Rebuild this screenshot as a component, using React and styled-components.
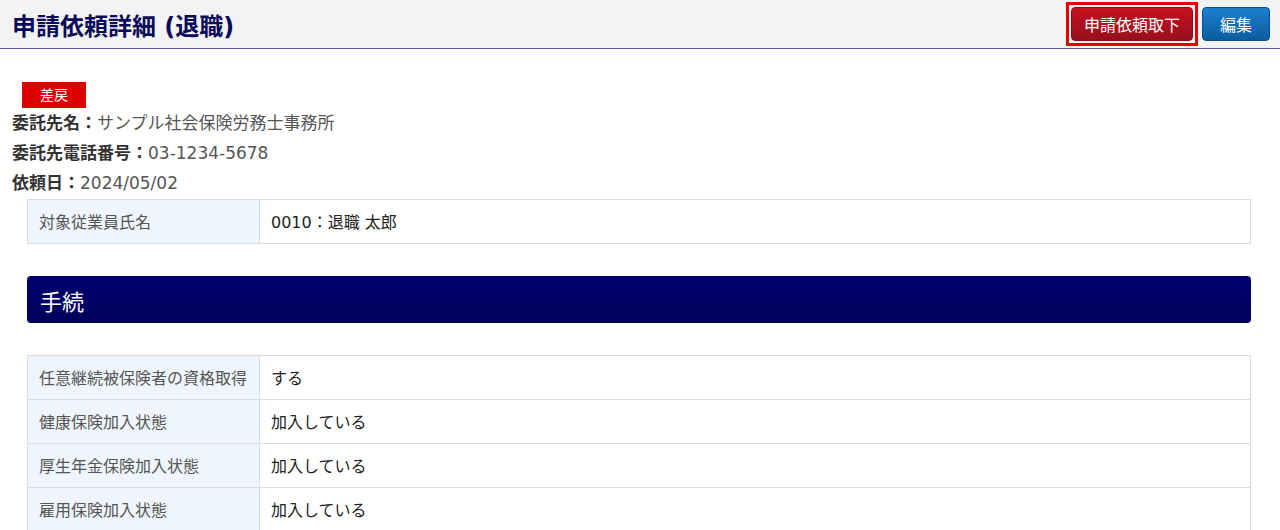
import React from 'react';
import styled, { createGlobalStyle } from 'styled-components';

const GlobalStyle = createGlobalStyle`
  html, body {
    margin: 0;
    padding: 0;
    background: #fff;
    font-family: "DejaVu Sans", "Noto Sans CJK JP", sans-serif;
    color: #333;
  }
`;

const Page = styled.div`
  width: 1280px;
`;

const Header = styled.div`
  display: flex;
  align-items: center;
  height: 48px;
  padding: 0 10px 0 12px;
  background: #f3f3f3;
  border-bottom: 1px solid #55559a;
`;

const Title = styled.h1`
  margin: 0;
  flex: 1;
  font-size: 24px;
  font-weight: 700;
  color: #0a0a5a;
`;

const Actions = styled.div`
  display: flex;
  align-items: center;
  gap: 4px;
`;

const Highlight = styled.div`
  padding: 2px;
  border: 3px solid #e60000;
  display: flex;
`;

const Button = styled.button`
  height: 34px;
  padding: 0 ${(p) => (p.wide ? '12px' : '17px')};
  border: 1px solid ${(p) => (p.tone === 'red' ? '#8e0a15' : '#0b4f88')};
  border-radius: 4px;
  color: #fff;
  font-family: inherit;
  font-size: 16px;
  cursor: pointer;
  background: ${(p) =>
    p.tone === 'red'
      ? 'linear-gradient(#c8101f, #96101c)'
      : 'linear-gradient(#1a80cf, #0c5c9e)'};
`;

const Body = styled.div`
  padding: 33px 29px 0 12px;
`;

const Badge = styled.span`
  display: inline-block;
  margin-left: 10px;
  width: 64px;
  height: 26px;
  line-height: 26px;
  text-align: center;
  background: #dd0000;
  color: #fff;
  font-size: 14px;
`;

const InfoLine = styled.div`
  height: 30px;
  line-height: 31px;
  font-size: 17px;
  color: #555;
`;

const InfoLabel = styled.span`
  font-weight: 700;
  color: #333;
`;

const Table = styled.table`
  margin-left: 15px;
  width: calc(100% - 15px);
  border-collapse: collapse;
  font-size: 16px;
  margin-top: ${(p) => p.top || 0}px;
`;

const Th = styled.th`
  width: 209px;
  height: 41px;
  padding: 0 11px 2px;
  text-align: left;
  font-weight: 400;
  color: #555;
  background: #eef5fc;
  border: 1px solid #ddd;
`;

const Td = styled.td`
  padding: 0 11px 2px;
  color: #222;
  border: 1px solid #ddd;
`;

const Section = styled.div`
  margin: 32px 0 0 15px;
  height: 47px;
  display: flex;
  align-items: center;
  padding-left: 13px;
  border-radius: 4px;
  background: linear-gradient(#000070, #00005a);
  color: #fff;
  font-size: 22px;
`;

const procedures = [
  ['任意継続被保険者の資格取得', 'する'],
  ['健康保険加入状態', '加入している'],
  ['厚生年金保険加入状態', '加入している'],
  ['雇用保険加入状態', '加入している'],
];

const App = () => (
  <Page>
    <GlobalStyle />
    <Header>
      <Title>申請依頼詳細 (退職)</Title>
      <Actions>
        <Highlight>
          <Button tone="red" wide>申請依頼取下</Button>
        </Highlight>
        <Button tone="blue">編集</Button>
      </Actions>
    </Header>
    <Body>
      <Badge>差戻</Badge>
      <InfoLine>
        <InfoLabel>委託先名：</InfoLabel>サンプル社会保険労務士事務所
      </InfoLine>
      <InfoLine>
        <InfoLabel>委託先電話番号：</InfoLabel>03-1234-5678
      </InfoLine>
      <InfoLine>
        <InfoLabel>依頼日：</InfoLabel>2024/05/02
      </InfoLine>
      <Table top={1}>
        <tbody>
          <tr>
            <Th>対象従業員氏名</Th>
            <Td>0010：退職 太郎</Td>
          </tr>
        </tbody>
      </Table>
      <Section>手続</Section>
      <Table top={32}>
        <tbody>
          {procedures.map(([label, value]) => (
            <tr key={label}>
              <Th>{label}</Th>
              <Td>{value}</Td>
            </tr>
          ))}
        </tbody>
      </Table>
    </Body>
  </Page>
);

export default App;
